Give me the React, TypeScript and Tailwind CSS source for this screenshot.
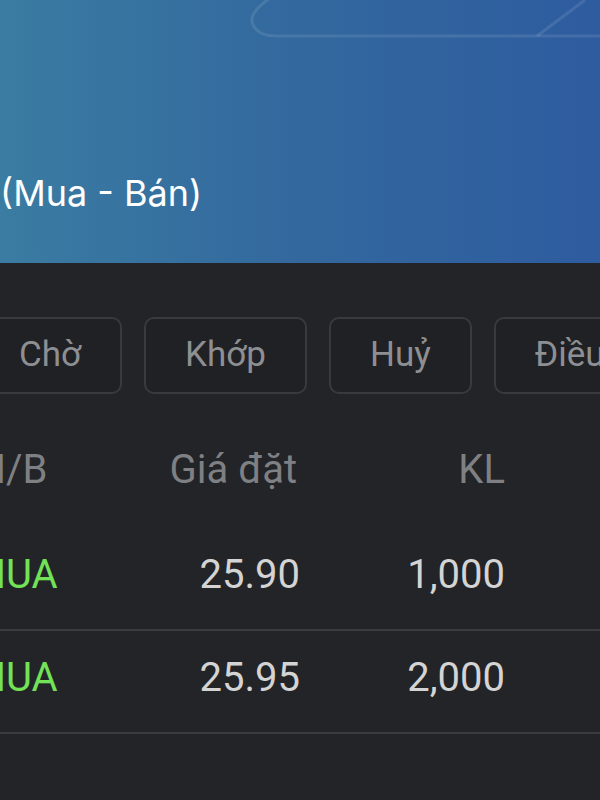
import React from 'react'

const tabs = ['Chờ', 'Khớp', 'Huỷ', 'Điều chỉnh']

const orders = [
  { side: 'MUA', price: '25.90', qty: '1,000' },
  { side: 'MUA', price: '25.95', qty: '2,000' },
]

export default function App() {
  return (
    <div className="relative w-[600px] h-[800px] overflow-hidden bg-[#232427] font-['Roboto',sans-serif]">
      {/* ── Header banner ── */}
      <div className="relative h-[263px] bg-gradient-to-r from-[#3a7ca2] via-[#33689e] to-[#2e5c9f] overflow-hidden">
        <svg
          className="absolute inset-0 pointer-events-none"
          width="600"
          height="263"
          viewBox="0 0 600 263"
          fill="none"
        >
          <path
            d="M270 -2 Q250 12 252 22 Q256 36 276 36 L600 36"
            stroke="rgba(255,255,255,0.1)"
            strokeWidth="3"
          />
          <path d="M537 36 L585 0" stroke="rgba(255,255,255,0.1)" strokeWidth="3" />
        </svg>
        <div className="pt-[172px]">
          <h1 className="text-[36px] leading-[42px] font-normal text-white font-['Inter',sans-serif] whitespace-nowrap">
            (Mua - Bán)
          </h1>
        </div>
      </div>

      {/* ── Status tabs ── */}
      <div className="flex gap-[22px] ml-[-22px] mt-[54px] whitespace-nowrap">
        {tabs.map(t => (
          <div
            key={t}
            className="h-[77px] px-[39px] flex items-center justify-center shrink-0 rounded-[10px] border-2 border-[#393a3e] bg-[#202124] text-[35px] text-[#8e8f92]"
          >
            {t}
          </div>
        ))}
      </div>

      {/* ── Order table ── */}
      <div className="mt-[24px]">
        <div className="flex items-center h-[110px] pb-[6px] ml-[-29px] text-[40px] text-[#7f8083] whitespace-nowrap">
          <div className="w-[179px]">M/B</div>
          <div className="w-[147px] text-right">Giá đặt</div>
          <div className="w-[208px] text-right">KL</div>
        </div>
        {orders.map((o, i) => (
          <div
            key={i}
            className="flex items-center h-[103px] border-b-2 border-[#3b3c40] text-[40px] whitespace-nowrap"
          >
            <div className="flex items-center ml-[-29px] pb-[8px]">
              <div className="w-[179px] text-[#72e257]">{o.side}</div>
              <div className="w-[150px] text-right text-[#d4d4d4]">{o.price}</div>
              <div className="w-[205px] text-right text-[#d4d4d4]">{o.qty}</div>
            </div>
          </div>
        ))}
      </div>
    </div>
  )
}
